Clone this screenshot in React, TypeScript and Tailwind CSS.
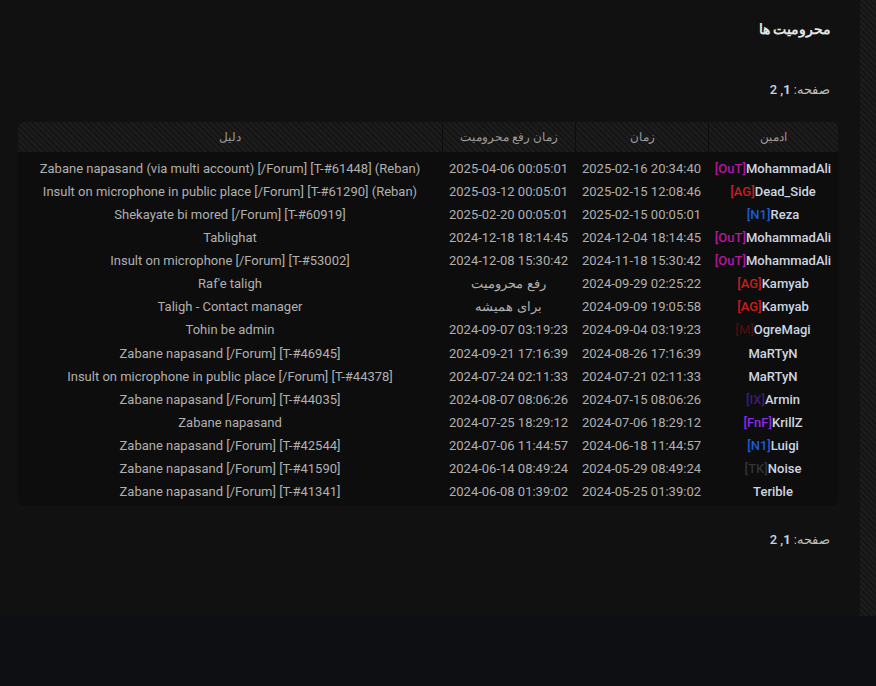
const rows: [string, string, string, string, string][] = [
  ["[OuT]", "text-[#b5179e]", "MohammadAli", "2025-02-16 20:34:40", "2025-04-06 00:05:01|Zabane napasand (via multi account) [/Forum] [T-#61448] (Reban)"],
  ["[AG]", "text-[#c81e1e]", "Dead_Side", "2025-02-15 12:08:46", "2025-03-12 00:05:01|Insult on microphone in public place [/Forum] [T-#61290] (Reban)"],
  ["[N1]", "text-[#1d5bd6]", "Reza", "2025-02-15 00:05:01", "2025-02-20 00:05:01|Shekayate bi mored [/Forum] [T-#60919]"],
  ["[OuT]", "text-[#b5179e]", "MohammadAli", "2024-12-04 18:14:45", "2024-12-18 18:14:45|Tablighat"],
  ["[OuT]", "text-[#b5179e]", "MohammadAli", "2024-11-18 15:30:42", "2024-12-08 15:30:42|Insult on microphone [/Forum] [T-#53002]"],
  ["[AG]", "text-[#c81e1e]", "Kamyab", "2024-09-29 02:25:22", "رفع محرومیت|Raf'e taligh"],
  ["[AG]", "text-[#c81e1e]", "Kamyab", "2024-09-09 19:05:58", "برای همیشه|Taligh - Contact manager"],
  ["[M]", "text-[#4a0e0e]", "OgreMagi", "2024-09-04 03:19:23", "2024-09-07 03:19:23|Tohin be admin"],
  ["", "", "MaRTyN", "2024-08-26 17:16:39", "2024-09-21 17:16:39|Zabane napasand [/Forum] [T-#46945]"],
  ["", "", "MaRTyN", "2024-07-21 02:11:33", "2024-07-24 02:11:33|Insult on microphone in public place [/Forum] [T-#44378]"],
  ["[IX]", "text-[#3f1a7a]", "Armin", "2024-07-15 08:06:26", "2024-08-07 08:06:26|Zabane napasand [/Forum] [T-#44035]"],
  ["[FnF]", "text-[#8a2be2]", "KrillZ", "2024-07-06 18:29:12", "2024-07-25 18:29:12|Zabane napasand"],
  ["[N1]", "text-[#1d5bd6]", "Luigi", "2024-06-18 11:44:57", "2024-07-06 11:44:57|Zabane napasand [/Forum] [T-#42544]"],
  ["[TK]", "text-[#333338]", "Noise", "2024-05-29 08:49:24", "2024-06-14 08:49:24|Zabane napasand [/Forum] [T-#41590]"],
  ["", "", "Terible", "2024-05-25 01:39:02", "2024-06-08 01:39:02|Zabane napasand [/Forum] [T-#41341]"],
];

const stripe = {
  backgroundImage: "repeating-linear-gradient(45deg, #1c1c1c 0 2px, #151515 2px 4px)",
};

function Pager() {
  return (
    <div className="text-[13px] text-[#bdbdbd] pr-[30px]" dir="rtl">
      صفحه: <span className="text-[#c8d4e0] font-medium" dir="ltr">2 ,<b>1</b></span>
    </div>
  );
}

export default function App() {
  return (
    <div className="w-[876px] h-[686px] bg-[#0b0c0e] flex flex-col" style={{ fontFamily: "Roboto, 'Noto Sans', sans-serif" }}>
      <div className="flex h-[616px]">
        <div className="w-[860px] bg-[#111111] flex flex-col">
          <div className="h-[58px] pt-[19px] pr-[29px] text-right text-[14px] font-bold text-[#e5e5e5]" dir="rtl">محرومیت ها</div>
          <div className="h-[64px] pt-[22px]"><Pager /></div>
          <div className="mx-[18px] w-[820px] rounded-[6px] bg-[#0d0d0d] overflow-hidden" dir="rtl">
            <div className="flex h-[30px] text-[12px] text-[#9a9a9a]" style={stripe}>
              <div className="w-[130px] flex items-center justify-center border-l border-[#0d0d0d]">ادمین</div>
              <div className="w-[133px] flex items-center justify-center border-l border-[#0d0d0d]">زمان</div>
              <div className="w-[133px] flex items-center justify-center border-l border-[#0d0d0d]">زمان رفع محرومیت</div>
              <div className="flex-1 flex items-center justify-center">دلیل</div>
            </div>
            <div className="pt-[5px] pb-[3px] text-[13px]">
              {rows.map((r, i) => {
                const [un, reason] = r[4].split("|");
                return (
                  <div key={i} className="flex h-[23.1px] items-center">
                    <div className="w-[130px] text-center font-medium text-[#cdd6e0]" dir="ltr">
                      <span className={r[1]}>{r[0]}</span>{r[2]}
                    </div>
                    <div className="w-[133px] text-center text-[#b0b0b0]" dir="ltr">{r[3]}</div>
                    <div className="w-[133px] text-center text-[#b0b0b0]" dir={un.startsWith("20") ? "ltr" : "rtl"}>{un}</div>
                    <div className="flex-1 text-center text-[#b0b0b0]" dir="ltr">{reason}</div>
                  </div>
                );
              })}
            </div>
          </div>
          <div className="pt-[24px]"><Pager /></div>
        </div>
        <div className="flex-1 bg-[#0c0c0c]" style={stripe}></div>
      </div>
      <div className="flex-1 bg-[#0d0f12]"></div>
    </div>
  );
}
